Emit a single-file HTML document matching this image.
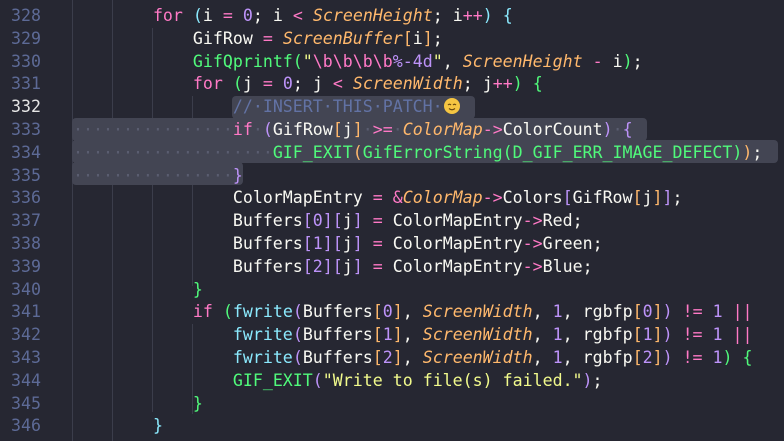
<!DOCTYPE html>
<html><head><meta charset="utf-8"><style>
html,body{margin:0;padding:0;}
body{width:784px;height:441px;background:#262732;overflow:hidden;position:relative;font-family:"DejaVu Sans Mono","Liberation Mono",monospace;font-size:16.6px;}
.ln{position:absolute;left:0;width:41px;text-align:right;color:#5d6a96;line-height:22.8px;}
.cd{position:absolute;left:73px;white-space:pre;color:#f8f8f2;line-height:22.8px;}
.g{position:absolute;width:1px;background:#3b3d4b;}
.sel{position:absolute;background:#434553;border-radius:4px;height:22.8px;}
.pk{color:#ff79c6}.gr{color:#50fa7b}.or{color:#ffb86c}.it{color:#ffb86c;font-style:italic}
.pu{color:#bd93f9}.cy{color:#8be9fd}.ye{color:#f1fa8c}.cm{color:#6272a4}.dt{color:#5a5d70}
</style></head><body>
<div class="g" style="left:72px;top:0;height:441px"></div>
<div class="g" style="left:112px;top:0;height:441px"></div>
<div class="g" style="left:152px;top:28px;height:384px"></div>
<div class="g" style="left:192px;top:96px;height:190px"></div>
<div class="g" style="left:192px;top:324px;height:90px"></div>

<div class="sel" style="left:232px;top:96px;width:243px"></div>
<div class="sel" style="left:72px;top:118px;width:575px"></div>
<div class="sel" style="left:72px;top:140px;width:706px"></div>
<div class="sel" style="left:72px;top:162px;width:171px"></div>

<div class="ln" style="top:5px">328</div>
<div class="ln" style="top:27.8px">329</div>
<div class="ln" style="top:50.6px">330</div>
<div class="ln" style="top:73.4px">331</div>
<div class="ln" style="top:96.2px;color:#e6e6e6">332</div>
<div class="ln" style="top:119px">333</div>
<div class="ln" style="top:141.8px">334</div>
<div class="ln" style="top:164.6px">335</div>
<div class="ln" style="top:187.4px">336</div>
<div class="ln" style="top:210.2px">337</div>
<div class="ln" style="top:233px">338</div>
<div class="ln" style="top:255.8px">339</div>
<div class="ln" style="top:278.6px">340</div>
<div class="ln" style="top:301.4px">341</div>
<div class="ln" style="top:324.2px">342</div>
<div class="ln" style="top:347px">343</div>
<div class="ln" style="top:369.8px">344</div>
<div class="ln" style="top:392.6px">345</div>
<div class="ln" style="top:415.4px">346</div>

<div class="cd" style="top:5px">        <span class="pk">for</span> <span class="cy">(</span>i <span class="pk">=</span> <span class="pu">0</span>; i <span class="pk">&lt;</span> <span class="it">ScreenHeight</span>; i<span class="pk">++</span><span class="cy">)</span> <span class="cy">{</span></div>
<div class="cd" style="top:27.8px">            GifRow <span class="pk">=</span> <span class="it">ScreenBuffer</span><span class="or">[</span>i<span class="or">]</span>;</div>
<div class="cd" style="top:50.6px">            <span class="gr">GifQprintf</span><span class="gr">(</span><span class="ye">"</span><span class="pk">\b\b\b\b</span><span class="pu">%-4d</span><span class="ye">"</span>, <span class="it">ScreenHeight</span> <span class="pk">-</span> i<span class="gr">)</span>;</div>
<div class="cd" style="top:73.4px">            <span class="pk">for</span> <span class="gr">(</span>j <span class="pk">=</span> <span class="pu">0</span>; j <span class="pk">&lt;</span> <span class="it">ScreenWidth</span>; j<span class="pk">++</span><span class="gr">)</span> <span class="gr">{</span></div>
<div class="cd" style="top:96.2px">                <span class="cm">//·INSERT·THIS·PATCH·</span><svg width="18" height="18" viewBox="0 0 18 18" style="vertical-align:-3px"><circle cx="9" cy="9" r="8" fill="#f5c542"/><path d="M5 8 q1.5 -1.5 3 0 M10 8 q1.5 -1.5 3 0 M6 11.5 q3 2.5 6 0" stroke="#6b4a10" stroke-width="1.2" fill="none"/></svg></div>
<div class="cd" style="top:119px"><span class="dt">················</span><span class="pk">if</span><span class="dt">·</span><span class="pu">(</span>GifRow<span class="or">[</span>j<span class="or">]</span><span class="dt">·</span><span class="pk">&gt;=</span><span class="dt">·</span><span class="it">ColorMap</span><span class="pk">-&gt;</span>ColorCount<span class="pu">)</span><span class="dt">·</span><span class="pu">{</span></div>
<div class="cd" style="top:141.8px"><span class="dt">····················</span><span class="gr">GIF_EXIT</span><span class="or">(</span><span class="gr">GifErrorString</span><span class="gr">(</span><span class="gr">D_GIF_ERR_IMAGE_DEFECT</span><span class="gr">)</span><span class="or">)</span>;</div>
<div class="cd" style="top:164.6px"><span class="dt">················</span><span class="pu">}</span></div>
<div class="cd" style="top:187.4px">                ColorMapEntry <span class="pk">=</span> <span class="pk">&amp;</span><span class="it">ColorMap</span><span class="pk">-&gt;</span>Colors<span class="pu">[</span>GifRow<span class="or">[</span>j<span class="or">]</span><span class="pu">]</span>;</div>
<div class="cd" style="top:210.2px">                Buffers<span class="pu">[0]</span><span class="pu">[</span>j<span class="pu">]</span> <span class="pk">=</span> ColorMapEntry<span class="pk">-&gt;</span>Red;</div>
<div class="cd" style="top:233px">                Buffers<span class="pu">[1]</span><span class="pu">[</span>j<span class="pu">]</span> <span class="pk">=</span> ColorMapEntry<span class="pk">-&gt;</span>Green;</div>
<div class="cd" style="top:255.8px">                Buffers<span class="pu">[2]</span><span class="pu">[</span>j<span class="pu">]</span> <span class="pk">=</span> ColorMapEntry<span class="pk">-&gt;</span>Blue;</div>
<div class="cd" style="top:278.6px">            <span class="gr">}</span></div>
<div class="cd" style="top:301.4px">            <span class="pk">if</span> <span class="gr">(</span><span class="cy">fwrite</span><span class="pu">(</span>Buffers<span class="or">[</span><span class="pu">0</span><span class="or">]</span>, <span class="it">ScreenWidth</span>, <span class="pu">1</span>, rgbfp<span class="or">[</span><span class="pu">0</span><span class="or">]</span><span class="pu">)</span> <span class="pk">!=</span> <span class="pu">1</span> <span class="pk">||</span></div>
<div class="cd" style="top:324.2px">                <span class="cy">fwrite</span><span class="pu">(</span>Buffers<span class="or">[</span><span class="pu">1</span><span class="or">]</span>, <span class="it">ScreenWidth</span>, <span class="pu">1</span>, rgbfp<span class="or">[</span><span class="pu">1</span><span class="or">]</span><span class="pu">)</span> <span class="pk">!=</span> <span class="pu">1</span> <span class="pk">||</span></div>
<div class="cd" style="top:347px">                <span class="cy">fwrite</span><span class="pu">(</span>Buffers<span class="or">[</span><span class="pu">2</span><span class="or">]</span>, <span class="it">ScreenWidth</span>, <span class="pu">1</span>, rgbfp<span class="or">[</span><span class="pu">2</span><span class="or">]</span><span class="pu">)</span> <span class="pk">!=</span> <span class="pu">1</span><span class="gr">)</span> <span class="gr">{</span></div>
<div class="cd" style="top:369.8px">                <span class="gr">GIF_EXIT</span><span class="pu">(</span><span class="ye">"Write to file(s) failed."</span><span class="pu">)</span>;</div>
<div class="cd" style="top:392.6px">            <span class="gr">}</span></div>
<div class="cd" style="top:415.4px">        <span class="cy">}</span></div>
</body></html>
